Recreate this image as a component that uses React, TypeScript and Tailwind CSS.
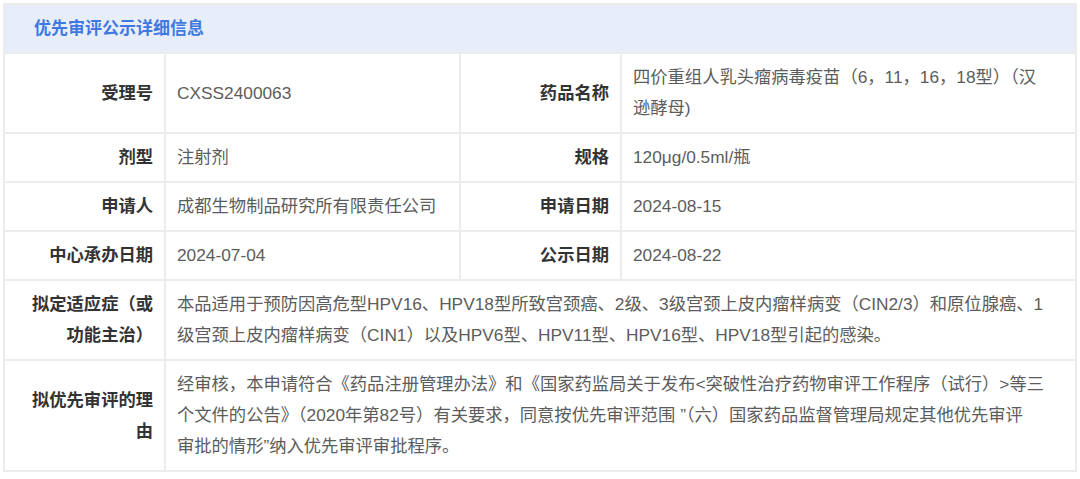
import React from "react";

const FONT = { fontFamily: '"Liberation Sans", "Noto Sans CJK SC", sans-serif' };

interface Cell {
  label: React.ReactNode;
  value: React.ReactNode;
}

const pairs: [Cell, Cell][] = [
  [
    { label: "受理号", value: "CXSS2400063" },
    {
      label: "药品名称",
      value: (
        <>
          四价重组人乳头瘤病毒疫苗（6，11，16，18型）（汉
          <br />
          逊酵母)
        </>
      ),
    },
  ],
  [
    { label: "剂型", value: "注射剂" },
    { label: "规格", value: "120μg/0.5ml/瓶" },
  ],
  [
    { label: "申请人", value: "成都生物制品研究所有限责任公司" },
    { label: "申请日期", value: "2024-08-15" },
  ],
  [
    { label: "中心承办日期", value: "2024-07-04" },
    { label: "公示日期", value: "2024-08-22" },
  ],
];

const wide: Cell[] = [
  {
    label: (
      <>
        拟定适应症（或
        <br />
        功能主治）
      </>
    ),
    value: (
      <>
        本品适用于预防因高危型HPV16、HPV18型所致宫颈癌、2级、3级宫颈上皮内瘤样病变（CIN2/3）和原位腺癌、1
        <br />
        级宫颈上皮内瘤样病变（CIN1）以及HPV6型、HPV11型、HPV16型、HPV18型引起的感染。
      </>
    ),
  },
  {
    label: (
      <>
        拟优先审评的理
        <br />
        由
      </>
    ),
    value: (
      <>
        经审核，本申请符合《药品注册管理办法》和《国家药监局关于发布&lt;突破性治疗药物审评工作程序（试行）&gt;等三
        <br />
        个文件的公告》（2020年第82号）有关要求，同意按优先审评范围 ”（六）国家药品监督管理局规定其他优先审评
        <br />
        审批的情形”纳入优先审评审批程序。
      </>
    ),
  },
];

const labelCls =
  "border-2 border-[#ececec] px-[11px] py-[8px] text-right align-middle font-bold text-[#333333] whitespace-nowrap";
const valueCls =
  "border-2 border-[#ececec] px-[11px] py-[8px] text-left align-middle text-[#5c5c5c] whitespace-nowrap";

export default function App() {
  return (
    <div className="w-[1080px] h-[479px] bg-white pl-[3px] pt-[3px]" style={FONT}>
      <table className="w-[1074px] border-collapse table-fixed text-[17.3px] leading-[31px]">
        <colgroup>
          <col className="w-[161px]" />
          <col className="w-[295px]" />
          <col className="w-[161px]" />
          <col />
        </colgroup>
        <tbody>
          <tr>
            <td
              colSpan={4}
              className="h-[49px] border-2 border-[#ececec] bg-[#e7eefa] px-[29px] text-[17px] font-bold text-[#3f78e0]"
            >
              优先审评公示详细信息
            </td>
          </tr>
          {pairs.map(([a, b], i) => (
            <tr key={i}>
              <td className={labelCls}>{a.label}</td>
              <td className={valueCls}>{a.value}</td>
              <td className={labelCls}>{b.label}</td>
              <td className={valueCls}>{b.value}</td>
            </tr>
          ))}
          {wide.map((row, i) => (
            <tr key={i}>
              <td className={labelCls}>{row.label}</td>
              <td colSpan={3} className={valueCls}>
                {row.value}
              </td>
            </tr>
          ))}
        </tbody>
      </table>
    </div>
  );
}
